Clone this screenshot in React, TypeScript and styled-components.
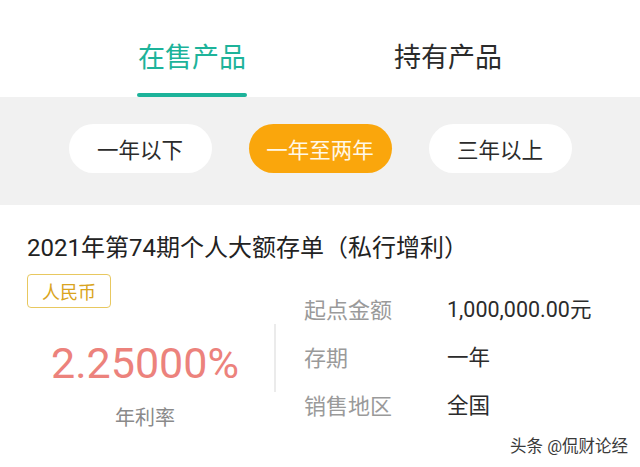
import * as React from "react";
import styled, { createGlobalStyle } from "styled-components";

const GlobalStyle = createGlobalStyle`
  html, body {
    margin: 0;
    padding: 0;
    background: #ffffff;
  }
  body {
    font-family: Roboto, "Noto Sans CJK SC", sans-serif;
  }
`;

const Page = styled.div`
  position: relative;
  width: 640px;
  height: 467px;
  overflow: hidden;
  background: #ffffff;
`;

const TabBar = styled.div`
  height: 97px;
  display: flex;
  justify-content: center;
  gap: 148px;
  background: #ffffff;
`;

const Tab = styled.div<{ $active?: boolean }>`
  position: relative;
  padding-top: 40px;
  font-size: 27px;
  line-height: 36px;
  color: ${(p) => (p.$active ? "#1db39a" : "#2b2b2b")};
  &::after {
    content: "";
    display: ${(p) => (p.$active ? "block" : "none")};
    position: absolute;
    left: -1px;
    right: -1px;
    bottom: 0;
    height: 4px;
    border-radius: 2px;
    background: #1db39a;
  }
`;

const FilterBand = styled.div`
  height: 108px;
  box-sizing: border-box;
  padding-top: 27px;
  background: #f1f1f1;
  display: flex;
  justify-content: center;
  gap: 37px;
`;

const Pill = styled.div<{ $active?: boolean }>`
  width: 143px;
  height: 49px;
  border-radius: 25px;
  display: flex;
  align-items: center;
  justify-content: center;
  font-size: 21.5px;
  background: ${(p) => (p.$active ? "#faa60c" : "#ffffff")};
  color: ${(p) => (p.$active ? "#fff8e8" : "#2b2b2b")};
`;

const Product = styled.div`
  padding: 27px 0 0 27px;
`;

const Title = styled.div`
  font-size: 24px;
  line-height: 32px;
  color: #222222;
`;

const Body = styled.div`
  display: flex;
  margin-top: 10px;
`;

const RateColumn = styled.div`
  width: 236px;
  display: flex;
  flex-direction: column;
  align-items: center;
`;

const Badge = styled.div`
  align-self: flex-start;
  width: 84px;
  height: 34px;
  box-sizing: border-box;
  border: 1px solid #e8c860;
  border-radius: 4px;
  display: flex;
  align-items: center;
  justify-content: center;
  font-size: 18px;
  color: #d9a420;
`;

const Rate = styled.div`
  margin-top: 30px;
  font-size: 43px;
  line-height: 50px;
  color: #ec827c;
`;

const RateLabel = styled.div`
  margin-top: 17px;
  font-size: 20px;
  line-height: 26px;
  color: #8a8a8a;
`;

const Divider = styled.div`
  width: 2px;
  height: 68px;
  margin-top: 50px;
  margin-left: 11px;
  background: #ebebeb;
`;

const InfoList = styled.div`
  margin-left: 28px;
  margin-top: 18px;
  display: flex;
  flex-direction: column;
  gap: 17px;
`;

const InfoRow = styled.div`
  display: flex;
  height: 31px;
  align-items: center;
`;

const InfoLabel = styled.span`
  width: 143px;
  font-size: 22px;
  color: #9a9a9a;
`;

const InfoValue = styled.span`
  font-size: 21.5px;
  color: #2b2b2b;
`;

const Watermark = styled.div`
  position: absolute;
  right: 12px;
  bottom: 10px;
  font-size: 16.5px;
  color: #3a3a3a;
  text-shadow: 0 0 2px #ffffff;
`;

const rows = [
  { label: "起点金额", value: "1,000,000.00元" },
  { label: "存期", value: "一年" },
  { label: "销售地区", value: "全国" },
];

export default function App() {
  return (
    <Page>
      <GlobalStyle />
      <TabBar>
        <Tab $active>在售产品</Tab>
        <Tab>持有产品</Tab>
      </TabBar>
      <FilterBand>
        <Pill>一年以下</Pill>
        <Pill $active>一年至两年</Pill>
        <Pill>三年以上</Pill>
      </FilterBand>
      <Product>
        <Title>2021年第74期个人大额存单（私行增利）</Title>
        <Body>
          <RateColumn>
            <Badge>人民币</Badge>
            <Rate>2.25000%</Rate>
            <RateLabel>年利率</RateLabel>
          </RateColumn>
          <Divider />
          <InfoList>
            {rows.map((r) => (
              <InfoRow key={r.label}>
                <InfoLabel>{r.label}</InfoLabel>
                <InfoValue>{r.value}</InfoValue>
              </InfoRow>
            ))}
          </InfoList>
        </Body>
      </Product>
      <Watermark>头条 @侃财论经</Watermark>
    </Page>
  );
}
